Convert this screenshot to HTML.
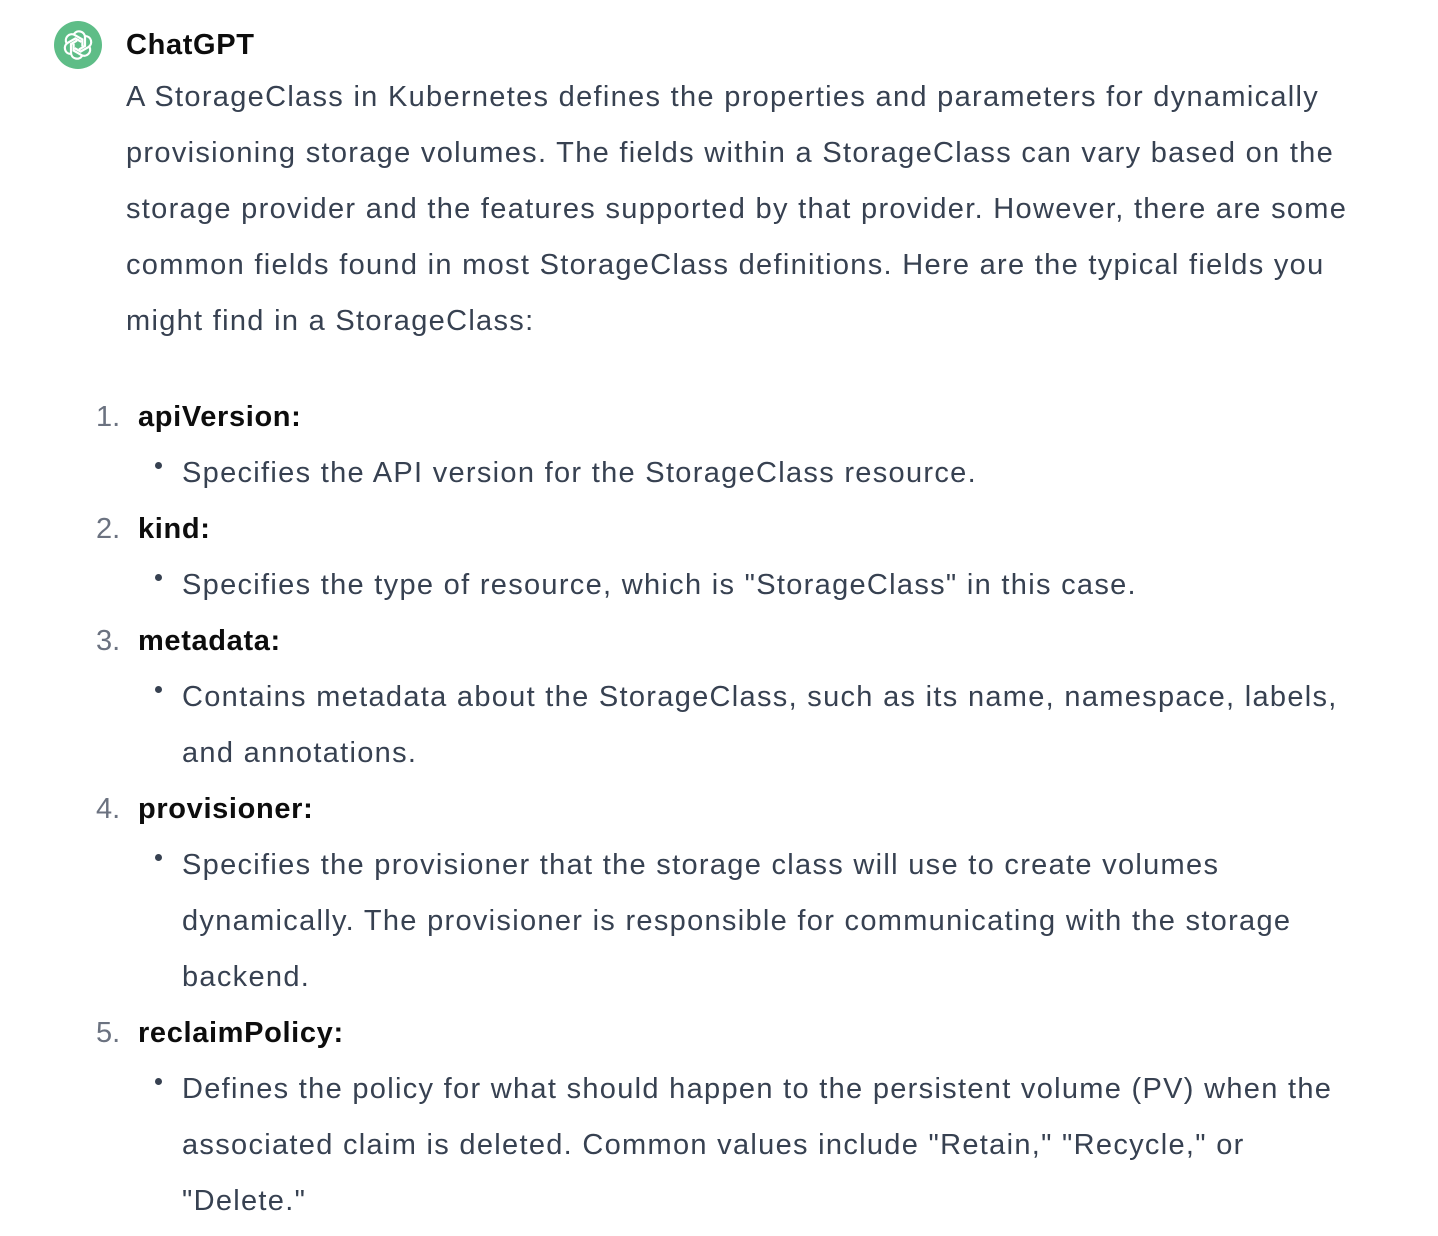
<!DOCTYPE html>
<html><head><meta charset="utf-8"><style>
body{margin:0;background:#fff;width:1438px;height:1236px;position:relative;overflow:hidden;font-family:"Liberation Sans",sans-serif;}
.l{position:absolute;left:126px;height:56px;line-height:56px;font-size:29px;color:#374151;white-space:nowrap;letter-spacing:1.3px;top:1px}
.h{font-weight:bold;color:#0d0d0d;letter-spacing:0.65px;}
.n{position:absolute;left:96px;height:56px;line-height:56px;font-size:29px;color:#6b7280;}
.b{position:absolute;left:155px;width:7px;height:7px;border-radius:50%;background:#374151;}
.s{left:182px;}
</style></head><body>
<svg style="position:absolute;left:54px;top:21px" width="48" height="48" viewBox="0 0 48 48">
<circle cx="24" cy="24" r="24" fill="#5ebd87"/>
<g fill="none" stroke="#fff" stroke-width="2.2" transform="translate(24 24)">
<g id="p"><path d="M-4 -11 a6 6 0 0 1 11 3 v9 l-6 3.5"/></g>
<use href="#p" transform="rotate(60)"/><use href="#p" transform="rotate(120)"/>
<use href="#p" transform="rotate(180)"/><use href="#p" transform="rotate(240)"/><use href="#p" transform="rotate(300)"/>
</g></svg>
<div class="l h" style="top:17px;">ChatGPT</div>
<div class="l" style="top:69px">A StorageClass in Kubernetes defines the properties and parameters for dynamically</div>
<div class="l" style="top:125px">provisioning storage volumes. The fields within a StorageClass can vary based on the</div>
<div class="l" style="top:181px">storage provider and the features supported by that provider. However, there are some</div>
<div class="l" style="top:237px">common fields found in most StorageClass definitions. Here are the typical fields you</div>
<div class="l" style="top:293px">might find in a StorageClass:</div>

<div class="n" style="top:389px">1.</div><div class="l h" style="left:138px;top:389px">apiVersion:</div>
<div class="b" style="top:462px"></div><div class="l s" style="top:445px">Specifies the API version for the StorageClass resource.</div>
<div class="n" style="top:501px">2.</div><div class="l h" style="left:138px;top:501px">kind:</div>
<div class="b" style="top:574px"></div><div class="l s" style="top:557px">Specifies the type of resource, which is "StorageClass" in this case.</div>
<div class="n" style="top:613px">3.</div><div class="l h" style="left:138px;top:613px">metadata:</div>
<div class="b" style="top:686px"></div><div class="l s" style="top:669px">Contains metadata about the StorageClass, such as its name, namespace, labels,</div>
<div class="l s" style="top:725px">and annotations.</div>
<div class="n" style="top:781px">4.</div><div class="l h" style="left:138px;top:781px">provisioner:</div>
<div class="b" style="top:854px"></div><div class="l s" style="top:837px">Specifies the provisioner that the storage class will use to create volumes</div>
<div class="l s" style="top:893px">dynamically. The provisioner is responsible for communicating with the storage</div>
<div class="l s" style="top:949px">backend.</div>
<div class="n" style="top:1005px">5.</div><div class="l h" style="left:138px;top:1005px">reclaimPolicy:</div>
<div class="b" style="top:1078px"></div><div class="l s" style="top:1061px">Defines the policy for what should happen to the persistent volume (PV) when the</div>
<div class="l s" style="top:1117px">associated claim is deleted. Common values include "Retain," "Recycle," or</div>
<div class="l s" style="top:1173px">"Delete."</div>
</body></html>
